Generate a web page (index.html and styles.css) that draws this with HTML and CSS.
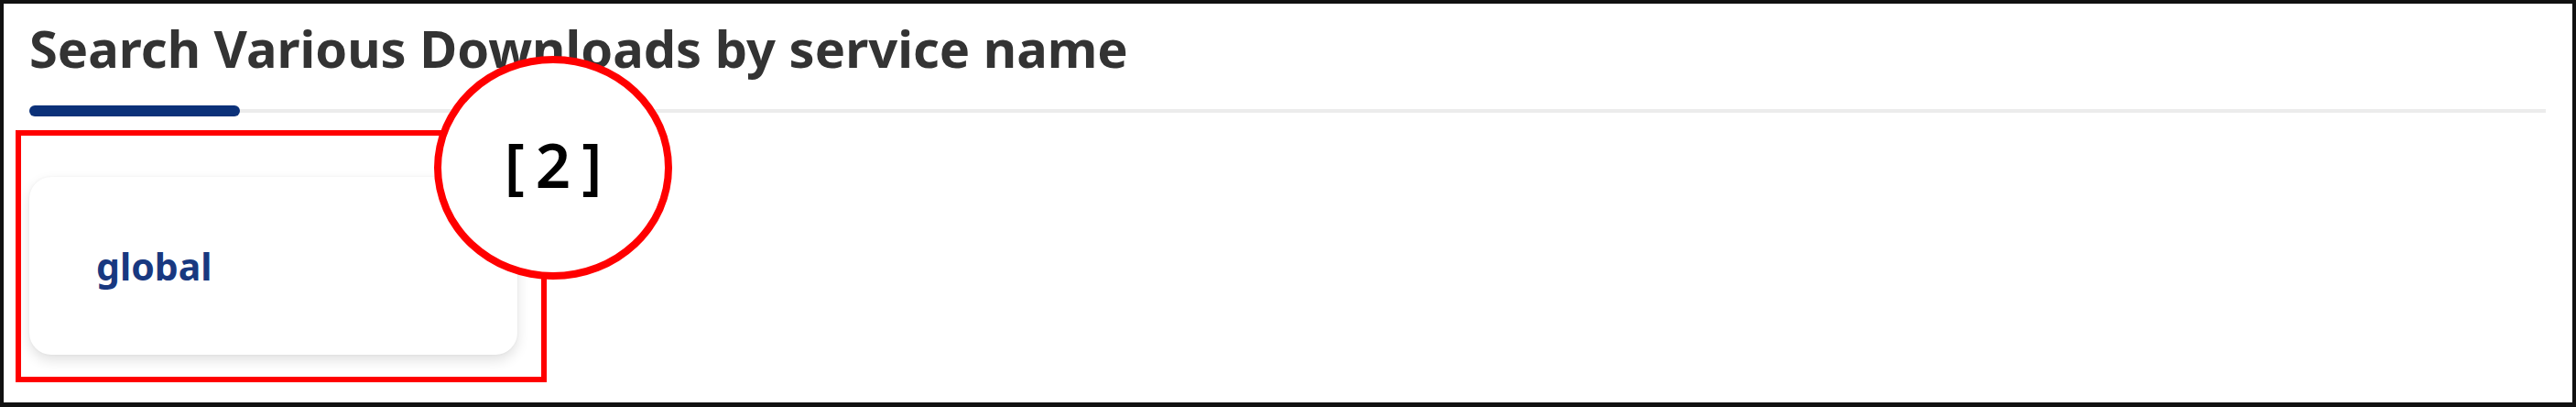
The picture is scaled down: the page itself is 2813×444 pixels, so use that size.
FILE: index.html
```html
<!DOCTYPE html>
<html lang="en">
<head>
  <meta charset="UTF-8">
  <meta name="viewport" content="width=device-width, initial-scale=1.0">
  <title>Downloads</title>
  <link rel="stylesheet" href="styles.css">
</head>
<body>
  <div class="frame">
    <div class="section">
      <h2 class="section-title">Search Various Downloads by service name</h2>
      <div class="tabs">
        <span class="tab-active"></span>
        <span class="tab-rest"></span>
      </div>
      <div class="service-list">
        <a class="service-card" href="#">global</a>
      </div>
    </div>

    <!-- annotation -->
    <div class="mark-box"></div>
    <div class="mark-circle">
      <span>[</span><span>2</span><span>]</span>
    </div>
  </div>
</body>
</html>
```

FILE: styles.css
```css
* {
    margin: 0;
    padding: 0;
    box-sizing: border-box;
}

body {
    font-family: "Noto Sans", Arial, sans-serif;
    background-color: #fff;
}

.frame {
    position: relative;
    width: 2813px;
    height: 444px;
    border: 4px solid #111;
    border-bottom-width: 5px;
    background-color: #fff;
}

.section {
    padding: 15px 29px 0 28px;
}

.section-title {
    font-size: 56px;
    line-height: 67px;
    font-weight: 700;
    color: #333;
}

.tabs {
    display: flex;
    align-items: center;
    height: 12px;
    margin-top: 29px;
}

.tab-active {
    width: 230px;
    height: 12px;
    border-radius: 6px;
    background-color: #0b3179;
}

.tab-rest {
    flex: 1;
    height: 4px;
    background-color: #ececec;
}

.service-list {
    display: flex;
    gap: 24px;
    margin-top: 66px;
}

.service-card {
    display: flex;
    align-items: center;
    width: 533px;
    height: 194px;
    padding-left: 73px;
    border-radius: 24px;
    background-color: #fff;
    box-shadow: 0 6px 14px rgba(0, 0, 0, 0.12), 0 0 3px rgba(0, 0, 0, 0.05);
    font-size: 41px;
    font-weight: 700;
    color: #183880;
    text-decoration: none;
}

.mark-box {
    position: absolute;
    left: 13px;
    top: 138px;
    width: 580px;
    height: 275px;
    border: 6px solid #f00;
}

.mark-circle {
    position: absolute;
    left: 470px;
    top: 57px;
    width: 260px;
    height: 244px;
    border: 8px solid #f00;
    border-radius: 50%;
    background-color: #fff;
    display: flex;
    justify-content: center;
    align-items: center;
    gap: 12px;
    padding-bottom: 8px;
    font-size: 67px;
    line-height: 67px;
    font-weight: 600;
    color: #000;
}
```
